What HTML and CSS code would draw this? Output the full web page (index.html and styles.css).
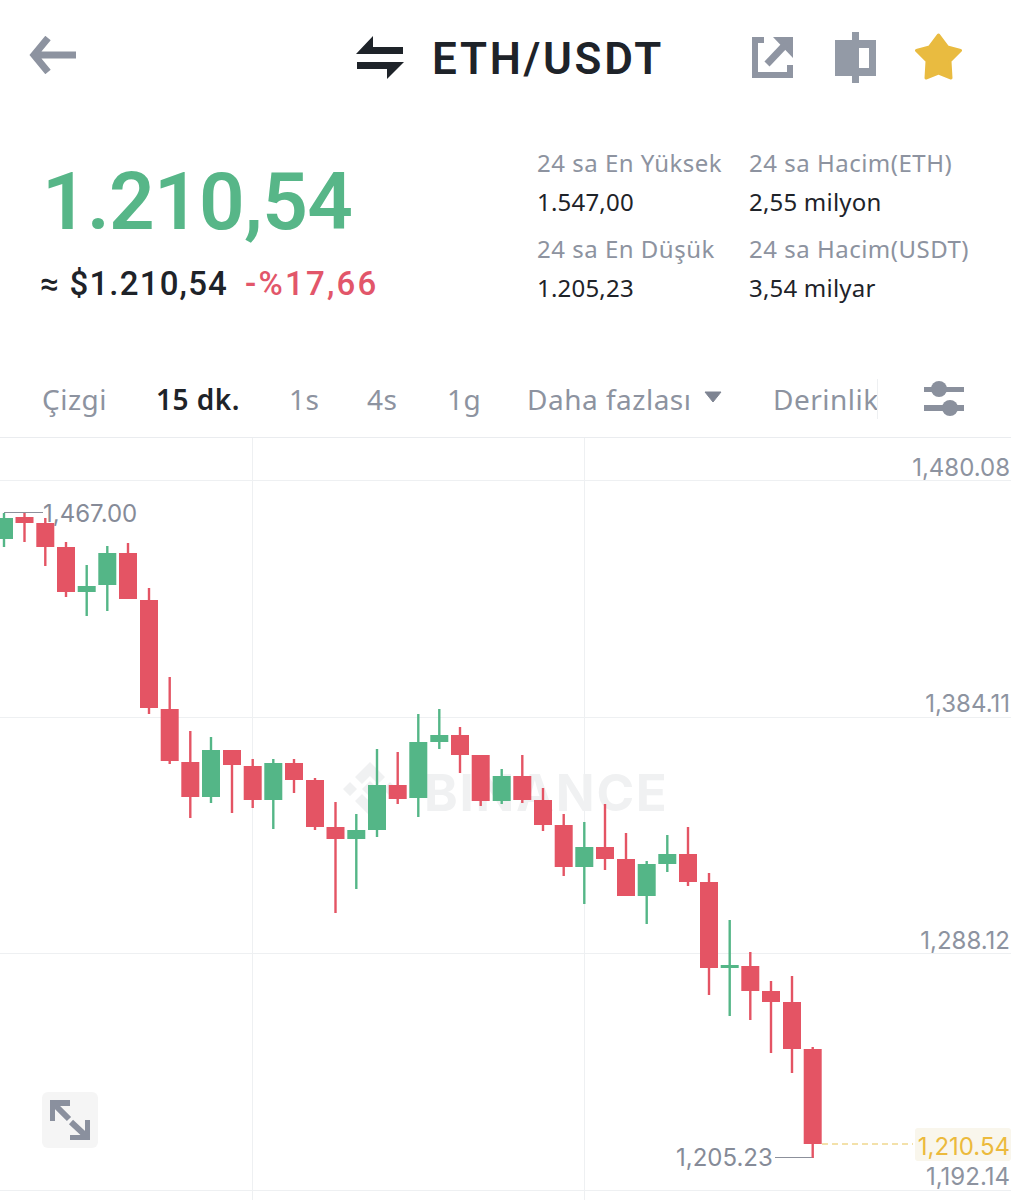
FILE: index.html
```html
<!DOCTYPE html>
<html lang="tr">
<head>
<meta charset="utf-8">
<title>ETH/USDT</title>
<link rel="stylesheet" href="styles.css">
</head>
<body>
<header class="topbar">
  <svg class="icon-back" viewBox="0 0 48 38" width="48" height="38"><path d="M19 2 5 19l14 17M6 19h41" class="back-stroke"/></svg>
  <div class="pair">
    <svg class="icon-swap" viewBox="0 0 48 44" width="48" height="44"><path d="M0 18 17 0v11h30v7zM1 26h47L31 43V33H1z"/></svg>
    <h1 class="pair-name">ETH/USDT</h1>
  </div>
  <div class="actions">
    <svg class="icon-share" viewBox="0 0 41 41" width="41" height="41"><path d="M0 0h12v6H6v29h29V28h6v13H0zM21 0h20v21z"/><path d="M15 27 33 8" class="share-stroke"/></svg>
    <svg class="icon-candle" viewBox="0 0 41 51" width="41" height="51"><path fill-rule="evenodd" d="M17 0h7v8h17v36H24v7h-7v-7H0V8h17zM24 16v20h10V16z"/></svg>
    <svg class="icon-star" viewBox="0 0 48 50" width="48" height="50"><path d="M23.500 5 32.500 17l13 3.500L35 31 36 48 23.500 43 11 48 12 31 1.500 20.500 14.500 17z"/></svg>
  </div>
</header>

<section class="summary">
  <div class="price-block">
    <div class="price">1.210,54</div>
    <div class="price-sub"><span class="fiat">≈ $1.210,54</span><span class="change">-%17,66</span></div>
  </div>
  <dl class="stats">
    <div class="stat"><dt>24 sa En Yüksek</dt><dd>1.547,00</dd></div>
    <div class="stat"><dt>24 sa Hacim(ETH)</dt><dd>2,55 milyon</dd></div>
    <div class="stat"><dt>24 sa En Düşük</dt><dd>1.205,23</dd></div>
    <div class="stat"><dt>24 sa Hacim(USDT)</dt><dd>3,54 milyar</dd></div>
  </dl>
</section>

<nav class="tabs">
  <div class="tab-list">
    <span class="tab">Çizgi</span>
    <span class="tab active">15 dk.</span>
    <span class="tab">1s</span>
    <span class="tab">4s</span>
    <span class="tab">1g</span>
    <span class="tab">Daha fazlası<svg class="caret" viewBox="0 0 20 14" width="20" height="14"><path d="M2 2h16l-8 10z"/></svg></span>
    <span class="tab">Derinlik</span>
  </div>
  <svg class="icon-sliders" viewBox="0 0 40 36" width="40" height="36"><path d="M0 6h40v5H0zM0 24h40v6H0z"/><circle cx="15" cy="8" r="8"/><circle cx="26" cy="27" r="8"/></svg>
</nav>

<main class="chart">
  <svg class="plot" viewBox="0 438 1011 762" width="1011" height="762">
    <g class="grid">
      <path d="M0 480.500H1011M0 717.500H1011M0 953.500H1011M0 1190.500H1011M252.500 437V1200M584.500 437V1200"/>
    </g>
    <g class="watermark">
      <path d="M370 762l15 15-7 7-8-8-8 8-7-7zM370 781l8 8-8 8-8-8zM350 782l7 7-7 7-7-7zM390 782l7 7-7 7-7-7zM370 816l-15-15 7-7 8 8 8-8 7 7z"/>
      <text x="424" y="811">BINANCE</text>
    </g>
    <g class="candles down">
      <path d="M24.500 513V542"/><rect x="15.500" y="517" width="18" height="6"/>
      <path d="M45.300 518V566"/><rect x="36.300" y="523" width="18" height="24"/>
      <path d="M66 542V597"/><rect x="57" y="547" width="18" height="45"/>
      <path d="M128 543V599"/><rect x="119" y="553" width="18" height="46"/>
      <path d="M149 588V714"/><rect x="140" y="600" width="18" height="108"/>
      <path d="M169.700 677V764"/><rect x="160.700" y="709" width="18" height="52"/>
      <path d="M190.300 731V818"/><rect x="181.300" y="762" width="18" height="35"/>
      <path d="M232 750V813"/><rect x="223" y="750" width="18" height="15"/>
      <path d="M252.700 759V808"/><rect x="243.700" y="766" width="18" height="34"/>
      <path d="M294 759V793"/><rect x="285" y="763" width="18" height="17"/>
      <path d="M315 778V830"/><rect x="306" y="780" width="18" height="47"/>
      <path d="M335.500 802V913"/><rect x="326.500" y="827" width="18" height="12"/>
      <path d="M397.700 752V804"/><rect x="388.700" y="785" width="18" height="14"/>
      <path d="M460 727V773"/><rect x="451" y="735" width="18" height="20"/>
      <path d="M480.700 755V806"/><rect x="471.700" y="755" width="18" height="46"/>
      <path d="M522.300 755V803"/><rect x="513.300" y="776" width="18" height="24"/>
      <path d="M543 788V831"/><rect x="534" y="800" width="18" height="25"/>
      <path d="M563.700 814V876"/><rect x="554.700" y="825" width="18" height="42"/>
      <path d="M605 804V870"/><rect x="596" y="847" width="18" height="12"/>
      <path d="M626 833V896"/><rect x="617" y="859" width="18" height="37"/>
      <path d="M688 827V886"/><rect x="679" y="854" width="18" height="28"/>
      <path d="M709 873V995"/><rect x="700" y="882" width="18" height="86"/>
      <path d="M750.300 952V1020"/><rect x="741.300" y="966" width="18" height="25"/>
      <path d="M771 981V1053"/><rect x="762" y="991" width="18" height="11"/>
      <path d="M792 976V1073"/><rect x="783" y="1002" width="18" height="47"/>
      <path d="M812.700 1047V1158"/><rect x="803.700" y="1049" width="18" height="95"/>
    </g>
    <g class="candles up">
      <path d="M4 513V547"/><rect x="-5" y="518" width="18" height="21"/>
      <path d="M86.700 565V616"/><rect x="77.700" y="586" width="18" height="6"/>
      <path d="M107.300 546V611"/><rect x="98.300" y="553" width="18" height="32"/>
      <path d="M211 737V803"/><rect x="202" y="750" width="18" height="47"/>
      <path d="M273.300 759V829"/><rect x="264.300" y="763" width="18" height="37"/>
      <path d="M356.300 814V889"/><rect x="347.300" y="830" width="18" height="9"/>
      <path d="M377 749V837"/><rect x="368" y="785" width="18" height="45"/>
      <path d="M418.300 714V817"/><rect x="409.300" y="742" width="18" height="56"/>
      <path d="M439.300 709V749"/><rect x="430.300" y="735" width="18" height="7"/>
      <path d="M501.700 769V804"/><rect x="492.700" y="776" width="18" height="25"/>
      <path d="M584.300 822V904"/><rect x="575.300" y="847" width="18" height="20"/>
      <path d="M646.700 861V924"/><rect x="637.700" y="864" width="18" height="32"/>
      <path d="M667.300 835V872"/><rect x="658.300" y="854" width="18" height="10"/>
      <path d="M729.700 920V1016"/><rect x="720.700" y="965" width="18" height="3"/>
    </g>
    <path class="leader" d="M4 512.500H43M775 1157.500H812"/>
    <path class="last-line" d="M822 1144H913"/>
    <rect class="last-tag" x="915" y="1128" width="96" height="33" rx="3"/>
    <text class="axis" x="1010" y="476">1,480.08</text>
    <text class="axis" x="1010" y="712">1,384.11</text>
    <text class="axis" x="1010" y="949">1,288.12</text>
    <text class="axis" x="1010" y="1185">1,192.14</text>
    <text class="axis last" x="1010" y="1155">1,210.54</text>
    <text class="mark" x="43" y="522">1,467.00</text>
    <text class="mark" x="676" y="1166">1,205.23</text>
  </svg>
  <button class="expand" type="button" aria-label="Expand">
    <svg viewBox="0 0 40 40" width="40" height="40"><path d="M2 21V3h18M4 4l15 15M38 20v18H20M36 36 21 22"/></svg>
  </button>
</main>
</body>
</html>
```
FILE: styles.css
```css
* { box-sizing: border-box; }
html, body { margin: 0; padding: 0; background: #fff; }
body { width: 1011px; height: 1200px; overflow: hidden; font-family: "Noto Sans", Roboto, sans-serif; color: #1e2329; }
svg { display: block; }

.topbar { display: grid; grid-template-columns: 327px auto 1fr; align-items: center; height: 117px; padding: 0 48px 0 29px; }
.icon-back { margin-top: -7px; }
.back-stroke { fill: none; stroke: #8d93a0; stroke-width: 7; }
.pair { display: flex; align-items: center; gap: 28px; }
.icon-swap { fill: #1e2329; margin-bottom: 2px; }
.pair-name { margin: 0; font: 600 44px/1 Roboto, sans-serif; letter-spacing: 2.7px; color: #1e2329; }
.actions { display: flex; align-items: center; justify-content: flex-end; gap: 39px; }
.icon-share { fill: #8f95a2; margin-bottom: 3px; }
.share-stroke { fill: none; stroke: #8f95a2; stroke-width: 7; }
.icon-candle { fill: #939aa6; margin-left: 3px; margin-bottom: 3px; }
.icon-star { fill: #e9bb40; stroke: #e9bb40; stroke-width: 3; stroke-linejoin: round; margin-bottom: 8px; }

.summary { display: flex; height: 248px; }
.price-block { width: 537px; padding: 45px 0 0 40px; }
.price { font: 600 80px/1 Roboto, sans-serif; color: #57b688; letter-spacing: -.7px; height: 100px; padding-left: 2px; }
.price-sub { display: flex; gap: 17px; font: 500 33px/44px Roboto, sans-serif; }
.fiat { color: #1e2329; letter-spacing: 1.2px; }
.change { color: #e2566a; letter-spacing: 2.2px; }
.stats { display: grid; grid-template-columns: 212px auto; margin: 0; padding-top: 26px; align-content: start; row-gap: 8px; }
.stat { display: block; }
.stat dt { font-size: 24px; line-height: 39px; color: #8d93a0; letter-spacing: .5px; }
.stat dd { margin: 0; font-size: 24px; line-height: 39px; color: #1e2329; letter-spacing: .2px; }

.tabs { display: flex; align-items: center; height: 73px; border-bottom: 1px solid #eaecef; padding: 0 0 4px 42px; }
.tab-list { display: grid; grid-template-columns: 114px 133px 78px 80px 80px 246px 105px; width: 836px; height: 40px; overflow: hidden; border-right: 1px solid #eef0f2; flex: none; }
.tab { display: flex; align-items: center; gap: 11px; font-size: 28px; line-height: 40px; color: #8d93a0; white-space: nowrap; letter-spacing: .5px; }
.tab.active { color: #1e2329; font-weight: 600; }
.caret { fill: #7e8492; stroke: #7e8492; stroke-width: 1; stroke-linejoin: round; margin-bottom: 4px; }
.icon-sliders { fill: #8a909d; margin-left: 46px; }

.chart { position: relative; height: 762px; }
.plot { overflow: hidden; }
.grid path { fill: none; stroke: #eef0f2; stroke-width: 1; }
.watermark { fill: #f0f1f2; }
.watermark text { font: 700 51px Inter, sans-serif; letter-spacing: 1.7px; }
.candles path { fill: none; stroke-width: 2.400; }
.down rect { fill: #e45464; }
.down path { stroke: #e45464; }
.up rect { fill: #54b687; }
.up path { stroke: #54b687; }
.leader { fill: none; stroke: #8c909b; stroke-width: 1; }
.last-line { fill: none; stroke: #f0d88f; stroke-width: 1.500; stroke-dasharray: 6 4; }
.last-tag { fill: #f9f6ec; }
.axis { font: 400 24px Inter, sans-serif; fill: #8d93a0; text-anchor: end; }
.axis.last { fill: #ecba3c; }
.mark { font: 400 24px Inter, sans-serif; fill: #868b98; }

.expand { position: absolute; left: 42px; top: 654px; width: 56px; height: 56px; padding: 8px; border: 0; border-radius: 6px; background: #f5f5f5; }
.expand path { fill: none; stroke: #8a909e; stroke-width: 6; }
```
